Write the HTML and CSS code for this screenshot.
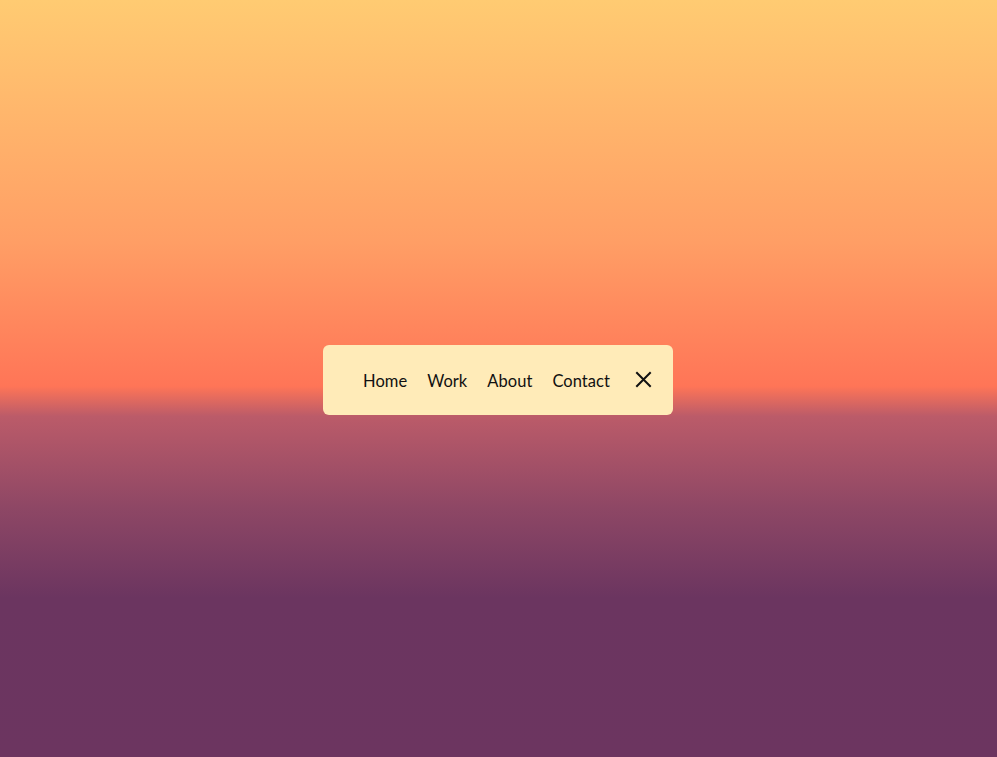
FILE: index.html
```html
<!DOCTYPE html>
<html>
<head>
<meta charset="utf-8">
<link rel="stylesheet" href="styles.css">
</head>
<body>
<main class="stage">
  <nav class="menu">
    <a class="link" href="#">Home</a>
    <a class="link" href="#">Work</a>
    <a class="link" href="#">About</a>
    <a class="link" href="#">Contact</a>
    <button class="close" aria-label="Close">
      <svg width="17" height="17" viewBox="0 0 17 17"><path d="M1.3 1.3 L15.7 15.7 M15.7 1.3 L1.3 15.7" stroke="#111" stroke-width="2" fill="none"/></svg>
    </button>
  </nav>
</main>
</body>
</html>
```
FILE: styles.css
```css
html, body {
  margin: 0;
  padding: 0;
  height: 100%;
}
body {
  background: linear-gradient(to bottom, #ffcb72 0%, #ff9e65 32%, #ff7557 51%, #bb5b69 55%, #8e4765 67%, #6b3560 79%, #6c3560 100%);
  font-family: Lato, "Open Sans", sans-serif;
}
.stage {
  height: 757px;
  box-sizing: border-box;
  padding-right: 1px;
  display: flex;
  align-items: center;
  justify-content: center;
}
.menu {
  width: 350px;
  height: 70px;
  box-sizing: border-box;
  background: #ffebb8;
  border-radius: 6px;
  display: flex;
  align-items: center;
  padding: 0 0 0 30px;
  margin-top: 2px;
}
.link {
  color: #111;
  text-decoration: none;
  font-size: 16.5px;
  letter-spacing: 0.05px;
  padding: 0 10px;
  line-height: 20px;
  margin-top: 2px;
}
.close {
  background: none;
  border: 0;
  padding: 0;
  margin-left: 15px;
  width: 17px;
  height: 17px;
  display: flex;
}
```
